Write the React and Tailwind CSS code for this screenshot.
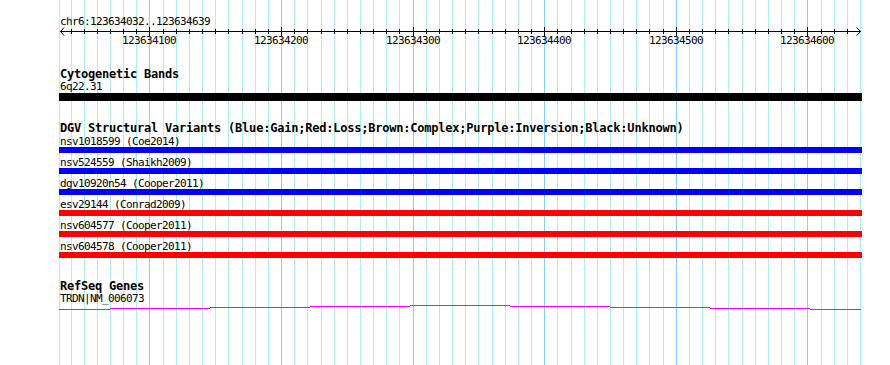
import React from "react";

const START = 123634032;
const S = 800 / 608;
const X = (bp) => 60 + (bp - START) * S;

const gridLines = [];
for (let bp = 123634040; bp <= 123634640; bp += 10) {
  gridLines.push({ x: Math.round(X(bp)), major: bp % 100 === 0, bp });
}

const majors = [123634100, 123634200, 123634300, 123634400, 123634500, 123634600];

const small =
  "font-['DejaVu_Sans_Mono',monospace] text-[11px] leading-[13px] tracking-[-0.62px] text-black whitespace-pre";
const bold =
  "font-['DejaVu_Sans_Mono',monospace] font-bold text-[12px] leading-[13px] tracking-[-0.22px] text-black whitespace-pre";

const variants = [
  { label: "nsv1018599 (Coe2014)", color: "bg-[#0000ff]" },
  { label: "nsv524559 (Shaikh2009)", color: "bg-[#0000ff]" },
  { label: "dgv10920n54 (Cooper2011)", color: "bg-[#0000ff]" },
  { label: "esv29144 (Conrad2009)", color: "bg-[#ff0000]" },
  { label: "nsv604577 (Cooper2011)", color: "bg-[#ff0000]" },
  { label: "nsv604578 (Cooper2011)", color: "bg-[#ff0000]" },
];

const geneSegs = [
  [59, 110, 5],
  [110, 210, 4],
  [210, 310, 3],
  [310, 410, 2],
  [410, 510, 1],
  [510, 610, 2],
  [610, 710, 3],
  [710, 810, 4],
  [810, 861, 5],
];

export default function App() {
  return (
    <div className="relative w-[890px] h-[365px] bg-white overflow-hidden">
      <svg
        className="absolute inset-0"
        width="890"
        height="365"
        shapeRendering="crispEdges"
      >
        <rect x="59" y="0" width="1" height="365" fill="#afeeee" />
        {gridLines.map((g) => (
          <rect
            key={g.bp}
            x={g.x}
            y="0"
            width="1"
            height="365"
            fill={g.major ? "#87cefa" : "#afeeee"}
          />
        ))}
      </svg>

      <div className="relative flex flex-col pl-[60px] pt-[15px]">
        <div className={`${small} h-[11px]`}>chr6:123634032..123634639</div>

        <div className="relative h-[20px] -ml-[60px] w-[890px]">
          <svg
            className="absolute left-0 top-0"
            width="890"
            height="20"
            shapeRendering="crispEdges"
          >
            <rect x="60" y="5" width="801" height="1" fill="#000" />
            {gridLines
              .filter((g) => g.bp <= 123634630)
              .map((g) => (
                <rect
                  key={g.bp}
                  x={g.x}
                  y={g.major ? 1 : 3}
                  width="1"
                  height={g.major ? 9 : 5}
                  fill="#000"
                />
              ))}
            <polyline
              points="64,1.5 60.5,5.5 64,9.5"
              fill="none"
              stroke="#000"
              strokeWidth="1"
              shapeRendering="auto"
            />
            <polyline
              points="856.5,1.5 860.5,5.5 856.5,9.5"
              fill="none"
              stroke="#000"
              strokeWidth="1"
              shapeRendering="auto"
            />
          </svg>
          {majors.map((bp) => (
            <span
              key={bp}
              className={`${small} absolute top-[8px]`}
              style={{ left: `${Math.round(X(bp)) - 27}px` }}
            >
              {bp}
            </span>
          ))}
        </div>

        <div className={`${bold} mt-[22px] h-[12px]`}>Cytogenetic Bands</div>
        <div className={`${small} h-[13px]`}>6q22.31</div>
        <div className="h-[8px] w-[803px] -ml-px bg-black" />

        <div className={`${bold} mt-[21px] h-[13px]`}>
          DGV Structural Variants (Blue:Gain;Red:Loss;Brown:Complex;Purple:Inversion;Black:Unknown)
        </div>
        {variants.map((v, i) => (
          <div key={v.label} className={i === 0 ? "" : "mt-[3px]"}>
            <div className={`${small} h-[12px]`}>{v.label}</div>
            <div className={`h-[6px] w-[803px] -ml-px ${v.color}`} />
          </div>
        ))}

        <div className={`${bold} mt-[22px] h-[12px]`}>RefSeq Genes</div>
        <div className={`${small} h-[12px]`}>TRDN|NM_006073</div>
        <svg
          className="-ml-[60px]"
          width="890"
          height="8"
          shapeRendering="crispEdges"
        >
          {geneSegs.map(([a, b, y]) => (
            <rect key={a} x={a} y={y} width={b - a} height="1" fill="#ff00ff" />
          ))}
        </svg>
      </div>
    </div>
  );
}
